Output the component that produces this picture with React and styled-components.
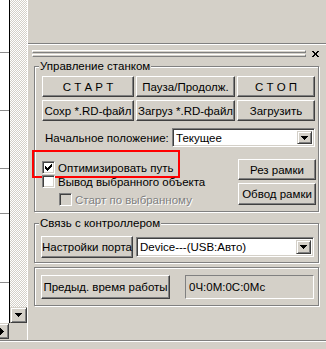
import React from "react"
import styled, { createGlobalStyle } from "styled-components"

const GlobalStyle = createGlobalStyle`
  html, body {
    margin: 0;
    padding: 0;
    background: #d4d0c8;
  }
  body {
    font-family: "Liberation Sans", Arial, sans-serif;
    font-size: 11.5px;
    color: #000;
  }
`

const S = {
  Screen: styled.div`
    width: 326px;
    height: 349px;
    display: flex;
    flex-direction: column;
    background: #d4d0c8;
    overflow: hidden;
  `,
  Main: styled.div`
    display: flex;
    height: 340px;
  `,
  BottomEdge: styled.div`
    flex: 1;
    border-top: 1px solid #808080;
    box-shadow: inset 0 1px 0 #fff;
  `,

  // left view with its scroll bars
  LeftView: styled.div`
    width: 27px;
    display: flex;
    flex-direction: column;
  `,
  ViewRow: styled.div`
    height: 323px;
    display: flex;
  `,
  Canvas: styled.div`
    width: 9px;
    background: #fff;
    border-right: 1px solid #000;
    svg { display: block; }
  `,
  VScroll: styled.div`
    width: 17px;
    display: flex;
    flex-direction: column;
  `,
  Track: styled.div`
    flex: 1;
    background: repeating-conic-gradient(#d4d0c8 0 25%, #fff 0 50%) 0 0 / 2px 2px;
  `,
  HScroll: styled.div`
    height: 17px;
    display: flex;
    overflow: hidden;
  `,
  ScrollBtn: styled.div`
    box-sizing: border-box;
    width: ${p => p.$w || 17}px;
    height: 16px;
    margin-left: ${p => p.$shift || 0}px;
    flex: none;
    display: flex;
    align-items: center;
    justify-content: ${p => p.$justify || "center"};
    background: #d4d0c8;
    border: 1px solid;
    border-color: #d4d0c8 #404040 #404040 #d4d0c8;
    box-shadow: inset 1px 1px 0 #fff, inset -1px -1px 0 #808080;
    svg { display: block; }
  `,
  ArrowPad: styled.span`
    width: 7px;
    flex: none;
  `,

  // docked pane
  Pane: styled.div`
    flex: 1;
    display: flex;
    flex-direction: column;
    border-left: 1px solid #fff;
  `,
  TopSpace: styled.div`
    height: 43px;
    flex: none;
  `,
  Dock: styled.div`
    flex: 1;
    display: flex;
    flex-direction: column;
    border-top: 1px solid #808080;
    box-shadow: inset 0 1px 0 #fff;
    padding-left: 4px;
  `,
  Gripper: styled.div`
    display: flex;
    align-items: center;
    margin-top: 6px;
    height: 7px;
  `,
  Bars: styled.div`
    width: 274px;
    display: flex;
    flex-direction: column;
    gap: 1px;
  `,
  Bar: styled.div`
    box-sizing: border-box;
    height: 3px;
    border: 1px solid;
    border-color: #fff #808080 #808080 #fff;
  `,
  Close: styled.div`
    margin-left: 6px;
    svg { display: block; }
  `,

  Group: styled.div`
    box-sizing: border-box;
    width: 285px;
    height: ${p => p.$h}px;
    margin: ${p => p.$mt}px 0 0 2px;
    display: flex;
    flex-direction: column;
    border: 1px solid #808080;
    box-shadow: inset 1px 1px 0 #fff, 1px 1px 0 #fff;
    padding-top: ${p => p.$pt || 0}px;
  `,
  GroupTitle: styled.div`
    align-self: flex-start;
    margin: -8px 0 0 4px;
    padding: 0 1px 0 1px;
    height: 14px;
    line-height: 14px;
    background: #d4d0c8;
    white-space: nowrap;
  `,
  ButtonGrid: styled.div`
    display: grid;
    grid-template-columns: 92px 99px 78px;
    grid-auto-rows: 21px;
    column-gap: 2px;
    row-gap: 3px;
    margin: 3px 0 0 7px;
  `,
  Button: styled.button`
    box-sizing: border-box;
    width: ${p => (p.$w ? p.$w + "px" : "auto")};
    height: ${p => (p.$h ? p.$h + "px" : "auto")};
    padding: 0;
    margin: 0;
    font: inherit;
    color: #000;
    background: #d4d0c8;
    border: 1px solid;
    border-color: #fff #404040 #404040 #fff;
    box-shadow: inset -1px -1px 0 #808080;
    white-space: nowrap;
    flex: none;
  `,
  LabelRow: styled.div`
    display: flex;
    align-items: center;
    justify-content: space-between;
    margin: 7px 3px 0 10px;
  `,
  Options: styled.div`
    display: flex;
    margin: 12px 2px 0 7px;
  `,
  Checks: styled.div`
    flex: 1;
    display: flex;
    flex-direction: column;
  `,
  SideButtons: styled.div`
    display: flex;
    flex-direction: column;
    gap: 3px;
  `,
  CheckRow: styled.label`
    position: relative;
    display: flex;
    align-items: center;
    gap: 3px;
    height: 13px;
    margin-top: ${p => p.$mt}px;
    padding-left: ${p => p.$indent || 0}px;
    color: ${p => (p.$disabled ? "#808080" : "#000")};
    text-shadow: ${p => (p.$disabled ? "1px 1px 0 #fff" : "none")};
    white-space: nowrap;
  `,
  Box: styled.span`
    box-sizing: border-box;
    width: 13px;
    height: 13px;
    flex: none;
    display: flex;
    align-items: center;
    justify-content: center;
    background: ${p => (p.$disabled ? "#d4d0c8" : "#fff")};
    border: 1px solid;
    border-color: #808080 #fff #fff #808080;
    box-shadow: inset 1px 1px 0 #404040, inset -1px -1px 0 #d4d0c8;
    svg { display: block; }
  `,
  Highlight: styled.span`
    position: absolute;
    left: -10px;
    top: -11px;
    width: 148px;
    height: 28px;
    box-sizing: border-box;
    border: 2px solid #f00;
    pointer-events: none;
  `,
  Combo: styled.div`
    box-sizing: border-box;
    width: ${p => p.$w}px;
    height: ${p => p.$h}px;
    display: flex;
    padding: 2px;
    background: #fff;
    border: 1px solid;
    border-color: #808080 #fff #fff #808080;
    box-shadow: inset 1px 1px 0 #404040, inset -1px -1px 0 #d4d0c8;
  `,
  ComboText: styled.span`
    flex: 1;
    display: flex;
    align-items: center;
    padding-left: 1px;
    white-space: nowrap;
    overflow: hidden;
  `,
  DropBtn: styled.span`
    box-sizing: border-box;
    width: 15px;
    display: flex;
    align-items: center;
    justify-content: center;
    background: #d4d0c8;
    border: 1px solid;
    border-color: #d4d0c8 #404040 #404040 #d4d0c8;
    box-shadow: inset 1px 1px 0 #fff, inset -1px -1px 0 #808080;
    svg { display: block; }
  `,
  Row: styled.div`
    display: flex;
    align-items: center;
    gap: ${p => p.$gap}px;
    margin: ${p => p.$mt || 0}px 0 0 6px;
  `,
  Field: styled.div`
    box-sizing: border-box;
    width: ${p => p.$w}px;
    height: ${p => p.$h}px;
    display: flex;
    align-items: center;
    padding-left: 3px;
    border: 1px solid;
    border-color: #808080 #fff #fff #808080;
  `,
}

const CheckMark = () => (
  <svg width="7" height="7" viewBox="0 0 7 7" shapeRendering="crispEdges">
    <path
      d="M0 2h1v3H0z M1 3h1v3H1z M2 4h1v3H2z M3 3h1v3H3z M4 2h1v3H4z M5 1h1v3H5z M6 0h1v3H6z"
      fill="#000"
    />
  </svg>
)

const DownArrow = () => (
  <svg width="7" height="4" viewBox="0 0 7 4" shapeRendering="crispEdges">
    <path d="M0 0h7v1H0z M1 1h5v1H1z M2 2h3v1H2z M3 3h1v1H3z" fill="#000" />
  </svg>
)

const RightArrow = () => (
  <svg width="4" height="7" viewBox="0 0 4 7" shapeRendering="crispEdges">
    <path d="M0 0h1v7H0z M1 1h1v5H1z M2 2h1v3H2z M3 3h1v1H3z" fill="#000" />
  </svg>
)

const CloseX = () => (
  <svg width="7" height="6" viewBox="0 0 7 6" shapeRendering="crispEdges">
    <path
      d="M0 0h2v1H0z M5 0h2v1H5z M1 1h2v1H1z M4 1h2v1H4z M2 2h3v2H2z M1 4h2v1H1z M4 4h2v1H4z M0 5h2v1H0z M5 5h2v1H5z"
      fill="#000"
    />
  </svg>
)

const Checkbox = ({ checked, disabled, children, mt, indent, highlight }) => (
  <S.CheckRow $mt={mt} $indent={indent} $disabled={disabled}>
    <S.Box $disabled={disabled}>{checked && <CheckMark />}</S.Box>
    {children}
    {highlight && <S.Highlight />}
  </S.CheckRow>
)

const ComboBox = ({ w, h, value }) => (
  <S.Combo $w={w} $h={h}>
    <S.ComboText>{value}</S.ComboText>
    <S.DropBtn>
      <DownArrow />
    </S.DropBtn>
  </S.Combo>
)

const ticks = [52, 110, 168, 213, 282]

export default function App() {
  return (
    <>
      <GlobalStyle />
      <S.Screen>
        <S.Main>
          <S.LeftView>
            <S.ViewRow>
              <S.Canvas>
                <svg width="9" height="323" shapeRendering="crispEdges">
                  {ticks.map(y => (
                    <rect key={y} x="0" y={y} width="9" height="1" fill="#8c8c8c" />
                  ))}
                </svg>
              </S.Canvas>
              <S.VScroll>
                <S.Track />
                <S.ScrollBtn>
                  <DownArrow />
                </S.ScrollBtn>
              </S.VScroll>
            </S.ViewRow>
            <S.HScroll>
              <S.ScrollBtn $w={17} $shift={-8} $justify="flex-start">
                <S.ArrowPad />
                <RightArrow />
              </S.ScrollBtn>
            </S.HScroll>
          </S.LeftView>

          <S.Pane>
            <S.TopSpace />
            <S.Dock>
              <S.Gripper>
                <S.Bars>
                  <S.Bar />
                  <S.Bar />
                </S.Bars>
                <S.Close>
                  <CloseX />
                </S.Close>
              </S.Gripper>

              <S.Group $h={146} $mt={9}>
                <S.GroupTitle>Управление станком</S.GroupTitle>
                <S.ButtonGrid>
                  <S.Button>С Т А Р Т</S.Button>
                  <S.Button>Пауза/Продолж.</S.Button>
                  <S.Button>С Т О П</S.Button>
                  <S.Button>Сохр *.RD-файл</S.Button>
                  <S.Button>Загруз *.RD-файл</S.Button>
                  <S.Button>Загрузить</S.Button>
                </S.ButtonGrid>
                <S.LabelRow>
                  <span>Начальное положение:</span>
                  <ComboBox w={143} h={19} value="Текущее" />
                </S.LabelRow>
                <S.Options>
                  <S.Checks>
                    <Checkbox checked mt={2} highlight>
                      Оптимизировать путь
                    </Checkbox>
                    <Checkbox mt={1}>Вывод выбранного объекта</Checkbox>
                    <Checkbox mt={5} indent={17} disabled>
                      Старт по выбранному
                    </Checkbox>
                  </S.Checks>
                  <S.SideButtons>
                    <S.Button $w={78} $h={21}>Рез рамки</S.Button>
                    <S.Button $w={78} $h={22}>Обвод рамки</S.Button>
                  </S.SideButtons>
                </S.Options>
              </S.Group>

              <S.Group $h={40} $mt={11}>
                <S.GroupTitle>Связь с контроллером</S.GroupTitle>
                <S.Row $gap={3} $mt={6}>
                  <S.Button $w={92} $h={22}>Настройки порта</S.Button>
                  <ComboBox w={178} h={20} value="Device---(USB:Авто)" />
                </S.Row>
              </S.Group>

              <S.Group $h={39} $mt={4} $pt={7}>
                <S.Row $gap={15}>
                  <S.Button $w={129} $h={24}>Предыд. время работы</S.Button>
                  <S.Field $w={129} $h={24}>0Ч:0М:0С:0Мс</S.Field>
                </S.Row>
              </S.Group>
            </S.Dock>
          </S.Pane>
        </S.Main>
        <S.BottomEdge />
      </S.Screen>
    </>
  )
}
